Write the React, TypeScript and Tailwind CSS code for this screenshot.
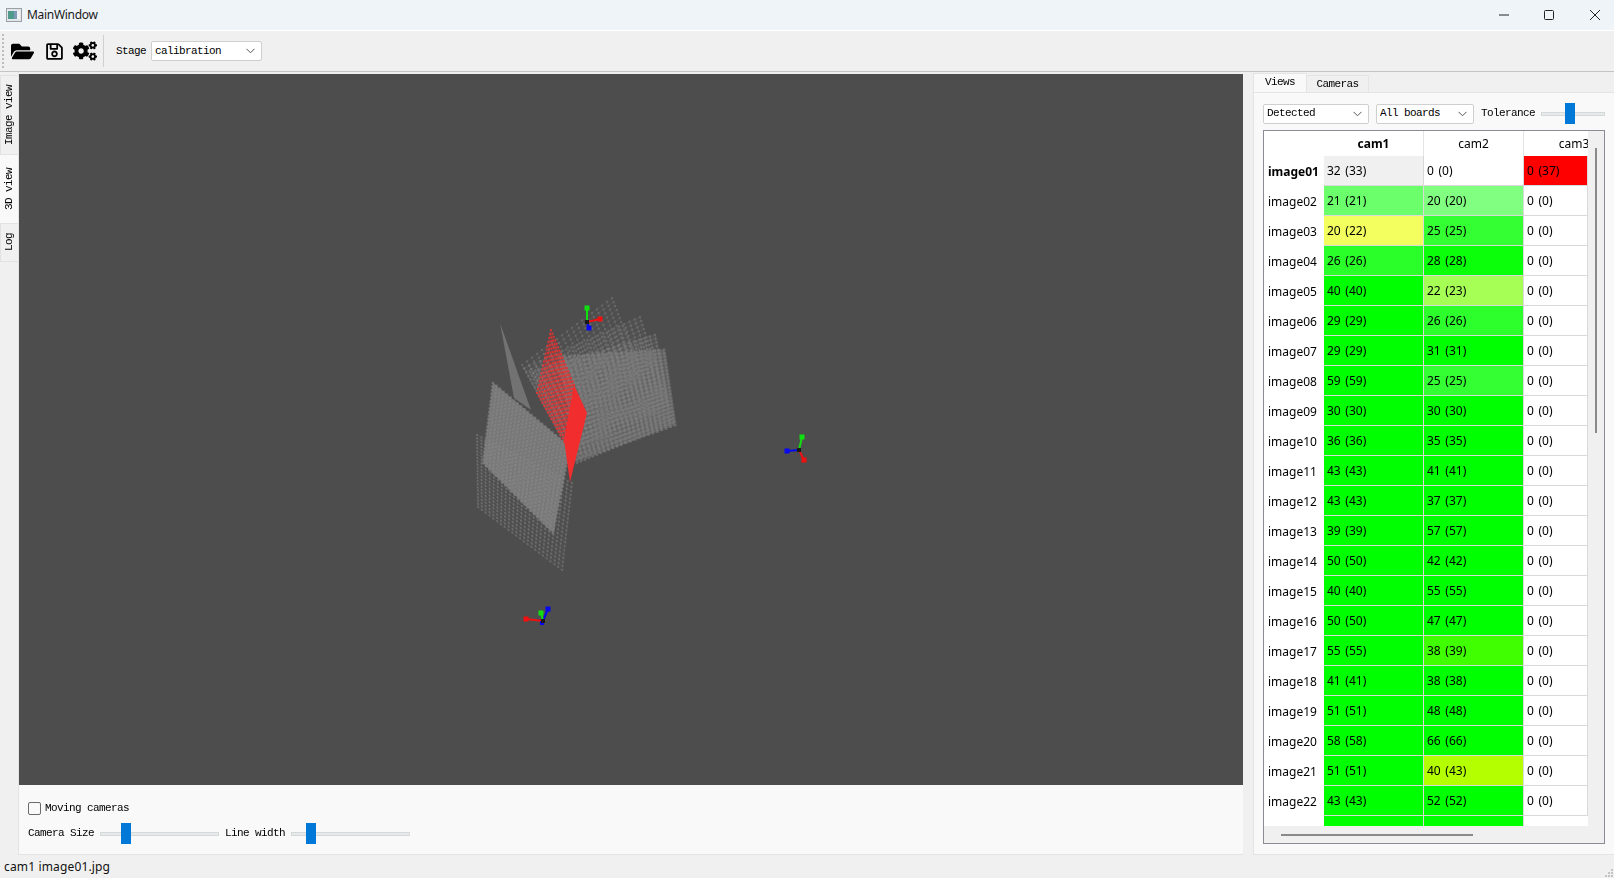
import { FaCogs, FaFolderOpen, FaRegSave } from "react-icons/fa";

const ui = { fontFamily: '"Noto Sans", sans-serif' };
const mono = { fontFamily: '"Liberation Mono", monospace' };

type Pt = [number, number];

const gridPath = (q: Pt[], n: number, size: number) => {
  let d = "";
  for (let i = 0; i <= n; i++) {
    for (let j = 0; j <= n; j++) {
      const u = i / n;
      const v = j / n;
      const x = (1 - v) * ((1 - u) * q[0][0] + u * q[1][0]) + v * ((1 - u) * q[3][0] + u * q[2][0]);
      const y = (1 - v) * ((1 - u) * q[0][1] + u * q[1][1]) + v * ((1 - u) * q[3][1] + u * q[2][1]);
      d += `M${(x - size / 2).toFixed(1)} ${(y - size / 2).toFixed(1)}h${size}v${size}h${-size}z`;
    }
  }
  return d;
};

const linesPath = (q: Pt[], n: number) => {
  const lerp = (a: Pt, b: Pt, t: number) => `${a[0] + (b[0] - a[0]) * t} ${a[1] + (b[1] - a[1]) * t}`;
  let d = "";
  for (let i = 0; i <= n; i++) {
    d += `M${lerp(q[0], q[1], i / n)}L${lerp(q[3], q[2], i / n)}`;
    d += `M${lerp(q[0], q[3], i / n)}L${lerp(q[1], q[2], i / n)}`;
  }
  return d;
};

const Plane = ({ q, n, size, color, opacity, line, fill = 0 }: { q: Pt[]; n: number; size: number; color: string; opacity: number; line: number; fill?: number }) => (
  <g>
    <polygon points={q.map((p) => p.join(",")).join(" ")} fill={color} opacity={fill} />
    <path d={linesPath(q, n)} stroke={color} strokeWidth="0.9" opacity={line} fill="none" />
    <path d={gridPath(q, n, size)} fill={color} opacity={opacity} />
  </g>
);

const Axis = ({ c, r, g, b, extra }: { c: Pt; r: Pt; g: Pt; b: Pt; extra?: Pt }) => (
  <g strokeWidth="2" strokeLinecap="round" className="blur-[0.3px]">
    <line x1={c[0]} y1={c[1]} x2={r[0]} y2={r[1]} stroke="#f01010" />
    <rect x={r[0] - 2.5} y={r[1] - 2.5} width="5" height="5" fill="#f01010" />
    <line x1={c[0]} y1={c[1]} x2={b[0]} y2={b[1]} stroke="#0808f0" />
    <rect x={b[0] - 2.5} y={b[1] - 2.5} width="5" height="5" fill="#0808f0" />
    <line x1={c[0]} y1={c[1]} x2={g[0]} y2={g[1]} stroke="#10e010" />
    <rect x={g[0] - 2.5} y={g[1] - 2.5} width="5" height="5" fill="#10e010" />
    {extra && <rect x={extra[0] - 2} y={extra[1] - 2} width="4" height="4" fill="#0808f0" />}
    <rect x={c[0] - 2} y={c[1] - 2} width="4" height="4" fill="#1a1a1a" />
  </g>
);

const Scene = () => (
  <svg className="block h-full w-full" viewBox="19 74 1224 711">
    <rect x="19" y="74" width="1224" height="711" fill="#4d4d4d" />
    <g className="blur-[0.6px]">
      <Plane q={[[522, 365], [612, 298], [640, 370], [560, 435]]} n={18} size={2} color="#858585" opacity={0.4} line={0.16} fill={0.03} />
      <Plane q={[[524, 368], [640, 317], [668, 405], [570, 450]]} n={22} size={2.2} color="#858585" opacity={0.4} line={0.18} fill={0.08} />
      <Plane q={[[530, 372], [655, 335], [673, 423], [577, 463]]} n={24} size={2.4} color="#858585" opacity={0.42} line={0.2} fill={0.12} />
      <Plane q={[[560, 357], [664, 350], [675, 425], [577, 460]]} n={22} size={3} color="#808080" opacity={0.55} line={0.25} fill={0.35} />
      <Plane q={[[477, 435], [572, 483], [562, 570], [478, 507]]} n={22} size={2} color="#7c7c7c" opacity={0.5} line={0.28} fill={0} />
      <polygon points="500,323 531,410 514,398" fill="#727272" />
      <Plane q={[[493, 383], [570, 447], [553, 533], [483, 463]]} n={22} size={2.6} color="#868686" opacity={0.55} line={0.15} fill={0.72} />
    </g>
    <g className="blur-[0.6px]">
      <Plane q={[[551, 330], [574, 385], [566, 445], [537, 393]]} n={16} size={1.9} color="#f03030" opacity={0.85} line={0.22} fill={0.08} />
      <polygon points="574,385 587,413 570,482 564,440" fill="#f22d2d" />
    </g>
    <Axis c={[587, 322]} g={[587, 308]} r={[600, 319]} b={[589, 328]} />
    <Axis c={[799, 450]} g={[802, 437]} r={[804, 460]} b={[787, 451]} />
    <Axis c={[543, 621]} g={[541, 613]} r={[526, 619]} b={[548, 609]} extra={[542, 623]} />
  </svg>
);

const Chevron = () => (
  <svg width="9" height="6" viewBox="0 0 9 6" className="shrink-0">
    <path d="M0.5 0.8 L4.5 4.8 L8.5 0.8" fill="none" stroke="#555" strokeWidth="1" />
  </svg>
);

const Combo = ({ label, w, h }: { label: string; w: string; h: string }) => (
  <div className={`flex items-center justify-between rounded-[2px] border border-[#cfcfcf] bg-white pl-[3px] pr-[6px] text-[11px] tracking-[-0.6px] text-black ${w} ${h}`}>
    <span style={mono}>{label}</span>
    <Chevron />
  </div>
);

const Slider = ({ w, left }: { w: string; left: string }) => (
  <div className={`relative h-[21px] ${w} flex items-center`}>
    <div className="h-[4px] w-full border border-[#d6d9d9] bg-[#e7eaea]" />
    <div className={`absolute top-0 h-[21px] w-[10px] bg-[#0078d7] ${left}`} />
  </div>
);

const rows: [string, string, string, string, string][] = [
  ["image01", "32 (33)", "#f0f0f0", "0 (0)", "#ffffff"],
  ["image02", "21 (21)", "#6bff6b", "20 (20)", "#80ff80"],
  ["image03", "20 (22)", "#f2ff5f", "25 (25)", "#33ff33"],
  ["image04", "26 (26)", "#2aff2a", "28 (28)", "#0bff0b"],
  ["image05", "40 (40)", "#00ff00", "22 (23)", "#a5ff55"],
  ["image06", "29 (29)", "#00ff00", "26 (26)", "#2cff2c"],
  ["image07", "29 (29)", "#00ff00", "31 (31)", "#00ff00"],
  ["image08", "59 (59)", "#00ff00", "25 (25)", "#33ff33"],
  ["image09", "30 (30)", "#00ff00", "30 (30)", "#00ff00"],
  ["image10", "36 (36)", "#00ff00", "35 (35)", "#00ff00"],
  ["image11", "43 (43)", "#00ff00", "41 (41)", "#00ff00"],
  ["image12", "43 (43)", "#00ff00", "37 (37)", "#00ff00"],
  ["image13", "39 (39)", "#00ff00", "57 (57)", "#00ff00"],
  ["image14", "50 (50)", "#00ff00", "42 (42)", "#00ff00"],
  ["image15", "40 (40)", "#00ff00", "55 (55)", "#00ff00"],
  ["image16", "50 (50)", "#00ff00", "47 (47)", "#00ff00"],
  ["image17", "55 (55)", "#00ff00", "38 (39)", "#40ff00"],
  ["image18", "41 (41)", "#00ff00", "38 (38)", "#00ff00"],
  ["image19", "51 (51)", "#00ff00", "48 (48)", "#00ff00"],
  ["image20", "58 (58)", "#00ff00", "66 (66)", "#00ff00"],
  ["image21", "51 (51)", "#00ff00", "40 (43)", "#b4ff00"],
  ["image22", "43 (43)", "#00ff00", "52 (52)", "#00ff00"],
  ["", "", "#00ff00", "", "#00ff00"],
];

const Cell = ({ text, bg, width }: { text: string; bg: string; width: string }) => (
  <div className={`flex h-[30px] shrink-0 items-center border-r border-b border-[#d9d9d9] pl-[3px] text-black [word-spacing:1.5px] ${width}`} style={{ backgroundColor: bg }}>
    {text}
  </div>
);

const ViewsTable = () => (
  <div className="mt-[6px] mr-[9px] ml-[9px] flex h-[714px] flex-col border border-[#8b8b96] bg-[#f0f0f0]" style={ui}>
    <div className="flex min-h-0 flex-1">
      <div className="w-[324px] shrink-0 overflow-hidden bg-white text-[12px]">
        <div className="flex h-[25px]">
          <div className="w-[60px] shrink-0" />
          <div className="flex w-[100px] shrink-0 items-center justify-center border-r border-[#e4e4e4] font-bold">cam1</div>
          <div className="flex w-[100px] shrink-0 items-center justify-center border-r border-[#e4e4e4]">cam2</div>
          <div className="flex w-[100px] shrink-0 items-center justify-center">cam3</div>
        </div>
        {rows.map(([name, a, aBg, b, bBg], i) => (
          <div className="flex" key={i}>
            <div className={`flex h-[30px] w-[60px] shrink-0 items-center pt-[1px] pl-[4px] text-black ${i === 0 ? "font-bold" : ""}`}>{name}</div>
            <Cell text={a} bg={aBg} width="w-[100px]" />
            <Cell text={b} bg={bBg} width="w-[100px]" />
            {i === 22 ? (
              <div className="h-[30px] w-[64px] shrink-0 bg-white" />
            ) : (
              <Cell text={i === 0 ? "0 (37)" : "0 (0)"} bg={i === 0 ? "#ff0000" : "#ffffff"} width="w-[64px]" />
            )}
          </div>
        ))}
      </div>
      <div className="flex-1 pt-[17px] pl-[7px]">
        <div className="h-[285px] w-[2px] bg-[#8a8a8a]" />
      </div>
    </div>
    <div className="h-[17px] shrink-0 pt-[8px] pl-[17px]">
      <div className="h-[2px] w-[192px] bg-[#8a8a8a]" />
    </div>
  </div>
);

export default function App() {
  return (
    <div className="flex h-[878px] w-[1614px] flex-col overflow-hidden bg-[#f0f0f0]" style={ui}>
      {/* title bar */}
      <div className="flex h-[31px] shrink-0 items-center justify-between border-b border-white bg-[#eff4f9]">
        <div className="flex items-center">
          <svg width="16" height="14" viewBox="0 0 16 14" className="ml-[6px]">
            <rect x="0.5" y="0.5" width="15" height="13" fill="#e4e7ea" stroke="#9a9fa5" />
            <rect x="2" y="3" width="6" height="8" fill="#4f9a8a" />
            <rect x="8" y="3" width="3" height="8" fill="#7f9ab8" />
            <rect x="11" y="3" width="3" height="8" fill="#f2f2f2" />
          </svg>
          <span className="ml-[5px] text-[12px] tracking-[-0.3px] text-[#1a1a1a]">MainWindow</span>
        </div>
        <div className="flex items-center">
          <svg width="10" height="10" viewBox="0 0 10 10" className="mr-[35px]">
            <path d="M0 5h10" stroke="#222" strokeWidth="1" />
          </svg>
          <svg width="10" height="10" viewBox="0 0 10 10" className="mr-[36px]">
            <rect x="0.5" y="0.5" width="9" height="9" rx="1" fill="none" stroke="#222" strokeWidth="1" />
          </svg>
          <svg width="10" height="10" viewBox="0 0 10 10" className="mr-[14px]">
            <path d="M0 0L10 10M10 0L0 10" stroke="#222" strokeWidth="1" />
          </svg>
        </div>
      </div>

      {/* toolbar */}
      <div className="flex h-[41px] shrink-0 items-center border-b border-[#c4c4c4] bg-[#f0f0f0]">
        <div className="ml-[2px] h-[34px] w-[2px] border-l-2 border-dotted border-[#bdbdbd]" />
        <FaFolderOpen className="ml-[7px] text-black" size={23} />
        <FaRegSave className="ml-[11px] text-black" size={19} />
        <FaCogs className="ml-[9px] text-black" size={24} />
        <div className="ml-[6px] h-[32px] w-px bg-[#d0d0d0]" />
        <span className="ml-[12px] text-[11px] tracking-[-0.6px] text-black" style={mono}>Stage</span>
        <div className="ml-[5px]">
          <Combo label="calibration" w="w-[111px]" h="h-[20px]" />
        </div>
      </div>

      <div className="flex min-h-0 flex-1">
        {/* left tabs */}
        <div className="flex w-[18px] shrink-0 flex-col pt-[3px] text-[11px] tracking-[-0.6px] text-black" style={mono}>
          <div className="flex h-[80px] items-center justify-center border border-[#e2e2e2] border-r-0 bg-[#f0f0f0]">
            <span className="rotate-180 [writing-mode:vertical-rl]">Image view</span>
          </div>
          <div className="flex h-[68px] items-center justify-center bg-[#f9f9f9]">
            <span className="rotate-180 [writing-mode:vertical-rl]">3D view</span>
          </div>
          <div className="flex h-[39px] items-center justify-center border border-[#e2e2e2] border-r-0 bg-[#f0f0f0]">
            <span className="rotate-180 [writing-mode:vertical-rl]">Log</span>
          </div>
        </div>

        {/* centre */}
        <div className="flex w-[1225px] shrink-0 flex-col border-l border-[#e4e4e4] pt-[2px]">
          <div className="h-[711px] shrink-0">
            <Scene />
          </div>
          <div className="flex-1 border-b border-[#e4e4e4] bg-[#f9f9f9] pt-[16px] pl-[9px] text-[11px] tracking-[-0.6px] text-black" style={mono}>
            <div className="flex h-[14px] items-center">
              <div className="h-[13px] w-[13px] rounded-[2px] border border-[#6b6b6b] bg-[#f9f9f9]" />
              <span className="ml-[4px]">Moving cameras</span>
            </div>
            <div className="mt-[8px] flex items-center">
              <span>Camera Size</span>
              <Slider w="ml-[6px] w-[119px]" left="left-[21px]" />
              <span className="ml-[6px]">Line width</span>
              <Slider w="ml-[6px] w-[119px]" left="left-[15px]" />
            </div>
          </div>
        </div>

        {/* right dock */}
        <div className="flex min-w-0 flex-1 flex-col pt-[1px] pl-[10px]">
          <div className="flex h-[19px] shrink-0 items-end text-[11px] tracking-[-0.6px] text-black" style={mono}>
            <div className="flex h-[19px] w-[54px] items-center justify-center border border-b-0 border-[#e4e4e4] bg-[#f9f9f9] pb-[1px]">Views</div>
            <div className="flex h-[17px] w-[62px] items-center justify-center border-t border-r border-[#e4e4e4] bg-[#f0f0f0]">Cameras</div>
          </div>
          <div className="flex min-h-0 flex-1 flex-col border-t border-b border-l border-[#e4e4e4] bg-[#f9f9f9] pt-[10px]">
            <div className="ml-[9px] flex items-center text-[11px] tracking-[-0.6px] text-black">
              <Combo label="Detected" w="w-[106px]" h="h-[20px]" />
              <div className="ml-[7px]">
                <Combo label="All boards" w="w-[98px]" h="h-[20px]" />
              </div>
              <span className="ml-[7px]" style={mono}>Tolerance</span>
              <Slider w="ml-[6px] w-[64px]" left="left-[24px]" />
            </div>
            <ViewsTable />
          </div>
        </div>
      </div>

      {/* status bar */}
      <div className="flex h-[23px] shrink-0 items-center justify-between bg-[#f0f0f0] pl-[4px] text-[12px] text-[#111]">
        <span className="tracking-[0.15px]">cam1 image01.jpg</span>
        <svg width="10" height="10" viewBox="0 0 10 10" className="mt-[12px]">
          <path d="M7 1h2v2H7zM4 4h2v2H4zM7 4h2v2H7zM1 7h2v2H1zM4 7h2v2H4zM7 7h2v2H7z" fill="#c4c4c4" />
        </svg>
      </div>
    </div>
  );
}
